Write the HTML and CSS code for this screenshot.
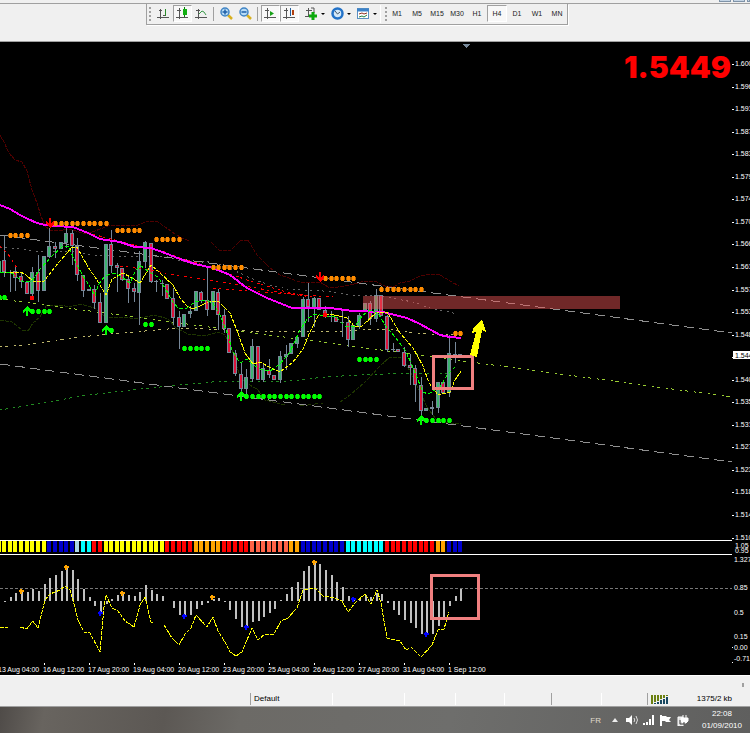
FILE: index.html
```html
<!DOCTYPE html>
<html lang="en">
<head>
    <meta charset="UTF-8">
    <meta name="viewport" content="width=device-width, initial-scale=1.0">
    <title>Chart terminal</title>
    <link rel="stylesheet" href="styles.css">
</head>
<body>
    <header class="top">
        <div class="window-btns"><i></i><i></i><i></i></div>
        <div class="toolbar">
            <span class="grip"></span>
            <button class="tool" aria-label="Bar chart">
                <svg width="13" height="13"><path class="axes" d="M3.500 2v10M0 10.500h12M2 3.500h3M6 8.500h3"/><path d="M8.500 2v7" stroke="#2a8a2a"/></svg>
            </button>
            <button class="tool pressed" aria-label="Candlesticks">
                <svg width="13" height="13"><path class="axes" d="M3.500 1v11M0 10.500h12M1 3.500h4"/><path d="M8.500 0v10" stroke="#0a7a0a"/><rect x="7" y="2" width="4" height="6" fill="#12b012"/></svg>
            </button>
            <button class="tool" aria-label="Line chart">
                <svg width="13" height="13"><path class="axes" d="M3.500 2v10M0 10.500h12M1 3.500h4"/><path d="M4 7l3-3 2 1 2 3" stroke="#3a9a4a"/></svg>
            </button>
            <span class="sep"></span>
            <button class="tool" aria-label="Zoom in">
                <svg width="13" height="13"><path d="M8 8l4 4" stroke="#d8b020" stroke-width="2.500"/><circle cx="5" cy="5" r="4" fill="#b8dcf6" stroke="#3f84c4" stroke-width="1.500"/><path d="M5 2.500v5M2.500 5h5" stroke="#1d5fa8" stroke-width="1.500"/></svg>
            </button>
            <button class="tool" aria-label="Zoom out">
                <svg width="13" height="13"><path d="M8 8l4 4" stroke="#d8b020" stroke-width="2.500"/><circle cx="5" cy="5" r="4" fill="#b8dcf6" stroke="#3f84c4" stroke-width="1.500"/><path d="M2.500 5h5" stroke="#1d5fa8" stroke-width="1.500"/></svg>
            </button>
            <span class="sep"></span>
            <button class="tool pressed" aria-label="Auto scroll">
                <svg width="13" height="13"><path class="axes" d="M3.500 1v11M0 10.500h12M1 3.500h4"/><path d="M6 4l4 2.500-4 2.500z" fill="#18a018"/></svg>
            </button>
            <button class="tool pressed" aria-label="Chart shift">
                <svg width="13" height="13"><path class="axes" d="M3.500 1v11M0 10.500h12M1 3.500h4"/><path d="M7.500 1v8" stroke="#2060a0"/><path d="M10 3v5" stroke="#b04010" stroke-width="2"/></svg>
            </button>
            <button class="tool menu" aria-label="Indicators">
                <svg width="13" height="13"><path class="axes" d="M1 3.500h6M3.500 1v9M0 9.500h6M6 1h3v5"/><path d="M8 5v8M4 9h8" stroke="#0aa80a" stroke-width="3"/></svg>
            </button>
            <button class="tool menu" aria-label="Periods">
                <svg width="13" height="13"><circle cx="6.500" cy="6.500" r="5" fill="#d4e9fa" stroke="#2272c8" stroke-width="2.500"/><path d="M4 4l2.500 3L9 5" stroke="#456"/></svg>
            </button>
            <button class="tool menu" aria-label="Templates">
                <svg width="13" height="13"><rect x=".5" y="1.500" width="11" height="10" fill="#fff" stroke="#5c8fc0"/><path d="M0 3h12" stroke="#3c82c8" stroke-width="3"/><path d="M2 7l3-1 2 1 3-1" stroke="#903020"/><path d="M2 10l3-1 2 1 3-2" stroke="#208040"/></svg>
            </button>
            <span class="divider"></span>
            <span class="grip narrow"></span>
            <button class="period">M1</button>
            <button class="period">M5</button>
            <button class="period">M15</button>
            <button class="period">M30</button>
            <button class="period">H1</button>
            <button class="period pressed">H4</button>
            <button class="period">D1</button>
            <button class="period">W1</button>
            <button class="period">MN</button>
        </div>
    </header>

    <main class="charts">
        <svg id="price" viewBox="0 42 750 498"></svg>
        <svg id="signal" viewBox="0 540 750 14"></svg>
        <svg id="osc" viewBox="0 554 750 121"></svg>
    </main>

    <footer class="status">
        <div class="scroll-row"><i></i></div>
        <div class="cells">
            <span></span>
            <span class="dark">Default</span>
            <span></span>
            <span></span>
            <span></span>
            <span></span>
            <span class="dark"></span>
            <span></span>
            <span class="dark connection">
                <svg width="18" height="9"><path d="M1 0v9M4 0v7M7 0v6M10 0v4M13 0v3M16 0v1" stroke="#6b8010" stroke-width="2"/><path d="M4 8v1M7 7v2M10 5v4M13 4v5M16 2v7" stroke="#184860" stroke-width="2"/></svg>
                1375/2 kb
            </span>
        </div>
    </footer>

    <div class="taskbar">
        <span class="lang">FR</span>
        <svg class="up" width="6" height="4"><path d="M0 4l3-4 3 4z" fill="#eee"/></svg>
        <svg width="12" height="10"><path d="M0 3h3l3-3v10l-3-3H0z" fill="#fff"/><path d="M8 3q1.500 2 0 4M10 1q3 4 0 8" fill="none" stroke="#ddd"/></svg>
        <svg width="12" height="10"><path d="M0 8h2v2H0zM3 7h2v3H3zM6 4h2v6H6zM9 0h2v10H9z" fill="#fff"/></svg>
        <svg width="12" height="11"><path d="M1 0v11" stroke="#fff" stroke-width="2"/><path d="M2 1h4l1 1h4L9 5l2 2H6L5 6H2z" fill="#fff"/></svg>
        <svg width="12" height="11"><path d="M1 2h5v9H1z" fill="#ddd" stroke="#fff"/><path d="M6 0v3M9 0v3M4 3h7v3L9 8H6L4 6z" fill="#fff" stroke="#fff"/><path d="M3 5v4h4v-2" fill="none" stroke="#444"/></svg>
        <div class="clock">22:08<br>01/09/2010</div>
    </div>

    <script src="chart.js"></script>
</body>
</html>
```

FILE: styles.css
```css
* {
    margin: 0;
    padding: 0;
    box-sizing: border-box;
}

body {
    font-family: "Liberation Sans", Arial, sans-serif;
    background: #f0f0f0;
    color: #000;
    min-height: 100vh;
    display: flex;
    flex-direction: column;
    overflow-x: hidden;
}

/* toolbar */
.top {
    height: 42px;
    border-bottom: 1px solid #a0a0a0;
}

.window-btns {
    height: 3px;
    display: flex;
    justify-content: flex-end;
    gap: 2px;
    overflow: hidden;
}

.window-btns i {
    width: 12px;
    height: 2px;
    background: #c4d4e4;
    border: 1px solid #7f93a8;
    border-top: none;
}

.window-btns i:last-child {
    width: 3px;
}

.toolbar {
    display: flex;
    align-items: center;
    height: 20px;
    border-top: 1px solid #a0a0a0;
    position: relative;
}

.toolbar::before {
    content: '';
    width: 148px;
    flex: none;
}

.toolbar::after {
    content: '';
    position: absolute;
    left: 146px;
    top: 0;
    width: 420px;
    height: 20px;
    border: 1px solid #a0a0a0;
    border-top: none;
    box-shadow: 1px 1px 0 #fff;
    pointer-events: none;
}

.grip {
    width: 6px;
    height: 14px;
    flex: none;
    background: repeating-linear-gradient(#a0a0a0 0 2px, transparent 2px 4px) 1px 0 / 2px 14px no-repeat;
}

.narrow {
    width: 3px;
}

.tool,
.period {
    flex: none;
    width: 19px;
    height: 17px;
    display: flex;
    align-items: center;
    justify-content: center;
    background: none;
    border: 1px solid transparent;
    font: 7px "Liberation Sans", Arial, sans-serif;
    color: #222;
}

.period {
    width: 20px;
}

.tool svg {
    flex: none;
    fill: none;
}

.axes {
    stroke: #555;
}

.tool.pressed,
.period.pressed {
    background: #f8f8f8;
    border-color: #a0a0a0 #fff #fff #a0a0a0;
}

.menu {
    width: 26px;
    gap: 3px;
    padding-left: 5px;
}

.menu::after {
    content: '';
    border: 2px solid transparent;
    border-top-color: #000;
    border-bottom: none;
}

.sep {
    width: 1px;
    height: 14px;
    margin: 0 3px 0 2px;
    background: #a0a0a0;
    flex: none;
}

.divider {
    width: 1px;
    height: 18px;
    margin: 0 3px;
    background: #fff;
    flex: none;
}

/* charts */
.charts {
    background: #000;
    display: flex;
    flex-direction: column;
}

.charts svg {
    display: block;
    width: 100%;
    height: auto;
    fill: none;
    shape-rendering: crispEdges;
}

.charts text {
    font: 7px "Liberation Sans", Arial, sans-serif;
    fill: #fff;
}

.charts .quote {
    font: 900 30px Inter, "Liberation Sans", sans-serif;
    fill: #f00;
}

.charts .now {
    fill: #000;
}

/* status bar */
.status {
    height: 32px;
    border-top: 1px solid #fff;
    border-bottom: 1px solid #a0a0a0;
    background: #f0f0f0;
}

.scroll-row {
    height: 17px;
    display: flex;
    justify-content: flex-end;
    align-items: center;
    padding-right: 6px;
}

.scroll-row i {
    width: 2px;
    height: 4px;
    background: #a0a0a0;
}

.cells {
    display: grid;
    grid-template-columns: 250fr 82fr 72fr 51fr 49fr 47fr 50fr 46fr 103fr;
    height: 12px;
    font-size: 8px;
    line-height: 12px;
}

.cells span {
    border-left: 1px solid #fff;
    padding-left: 3px;
    white-space: nowrap;
}

.cells span:first-child {
    border-left: none;
}

.cells .dark {
    border-color: #a0a0a0;
}

.cells .connection {
    display: flex;
    align-items: center;
    justify-content: space-between;
    padding-right: 18px;
}

/* taskbar */
.taskbar {
    flex: 1;
    min-height: 26px;
    display: flex;
    align-items: center;
    justify-content: flex-end;
    gap: 5px;
    padding-right: 8px;
    background: linear-gradient(100deg, #4f4b48 0, #68645f 6%, #5c5854 22%, #6c6a66 32%, #6e6e6c 60%, #5f5f5e);
    color: #fff;
    font-size: 8px;
}

.taskbar .lang {
    margin-right: 6px;
    color: #e0dccc;
}

.taskbar .up {
    margin-right: 3px;
}

.clock {
    margin-left: 8px;
    line-height: 12px;
    text-align: center;
}
```

FILE: chart.js
```javascript
const NS = 'http://www.w3.org/2000/svg';
const price = document.getElementById('price');
const signal = document.getElementById('signal');
const osc = document.getElementById('osc');

// x position of the bar with index i
const barX = i => Math.round(4.2 + i * 5.63);

function add(parent, tag, attrs, text) {
    const el = document.createElementNS(NS, tag);
    for (const key in attrs) el.setAttribute(key, attrs[key]);
    if (text) el.textContent = text;
    parent.appendChild(el);
    return el;
}

function rect(parent, x, y, width, height, fill) {
    return add(parent, 'rect', { x, y, width, height, fill });
}

function line(parent, points, stroke, dash, width) {
    add(parent, 'polyline', {
        points, stroke,
        'stroke-width': width || 1,
        'stroke-dasharray': dash || 'none'
    });
}

// bands, channel and averages
line(price, '0,135 4,142 9,153 15,160 22,162 27,171 32,190 37,203 41,216 45,226 50,230 56,231 70,229 85,234 95,231 108,226 138,225 148,221 158,222 168,229 175,234 182,238 189,241', '#500000', '4 1');
line(price, '211,242 219,250 231,250 241,240 248,240 257,255 270,268 280,275 300,282 320,282 328,287 338,287 350,285 365,281 375,281 385,286 395,286 400,283 410,281 420,276 430,274 440,275 450,281 459,286', '#500000', '4 1');
line(price, '0,320 12,322 22,330 28,331 33,323 40,317 46,306 60,305 70,307 80,304 95,308 105,317 125,317 135,319 155,315 168,319 176,328 188,334 205,336 218,332 225,335 232,350 238,370 242,380 258,390 265,400 285,405', '#1e3600', '4 1');
line(price, '300,406 323,403', '#1e3600', '4 3');
line(price, '340,402 350,395 365,382 380,366 390,357 400,357 405,362 412,375 420,392 427,407 435,418 440,422 461,424', '#1e3600', '4 1');
line(price, '0,247 20,249 35,251 75,251 90,255 130,257 165,256 180,261 210,262 225,266 250,278 270,285 287,289 323,291 353,295 380,296 413,302 430,308 458,314', '#666', '2 3 2 5');
line(price, '0,347 25,345 50,341 80,337 110,334 145,331 180,328 250,331 350,331 370,329 390,329 413,333 440,335 458,334', '#bdb76b', '2 3 3 6');
line(price, '0,410 50,402 80,396 140,389 180,385 212,382 290,381 325,377 360,375 410,373 450,374', '#228b22', '2 3 3 5');

line(price, '0,235 732,333', '#909090', '10 5');
line(price, '0,364 732,462', '#909090', '10 5');
line(price, '0,299 732,397', '#9acd32', '2 3 3 6');

// candles: high, body top, body bottom, low, direction
const candles = [
    [235, 260, 272, 277, 'r'], [270, 272, 273, 292, 'd'], [265, 271, 278, 291, 'r'], [273, 276, 282, 288, 'r'],
    [282, 282, 294, 294, 'r'], [267, 272, 294, 296, 'g'], [255, 272, 291, 302, 'r'], [256, 256, 291, 291, 'g'],
    [228, 246, 257, 258, 'g'], [242, 246, 249, 258, 'r'], [242, 242, 249, 249, 'g'], [227, 233, 243, 248, 'g'],
    [230, 233, 246, 265, 'r'], [238, 246, 275, 281, 'r'], [275, 275, 291, 297, 'r'], [289, 289, 291, 291, 'd'],
    [285, 289, 303, 309, 'r'], [293, 302, 323, 323, 'r'], [244, 244, 323, 323, 'g'], [230, 244, 266, 273, 'r'],
    [263, 265, 268, 292, 'r'], [268, 268, 280, 281, 'r'], [275, 279, 289, 303, 'r'], [283, 288, 292, 302, 'r'],
    [251, 261, 293, 325, 'g'], [241, 242, 262, 268, 'g'], [243, 243, 282, 283, 'r'], [280, 281, 282, 292, 'd'],
    [280, 283, 284, 296, 'd'], [284, 284, 299, 299, 'r'], [288, 298, 318, 325, 'r'], [311, 317, 327, 349, 'r'],
    [314, 314, 327, 327, 'g'], [306, 311, 314, 318, 'g'], [291, 291, 311, 311, 'g'], [291, 292, 301, 303, 'r'],
    [267, 300, 310, 316, 'r'], [291, 291, 310, 310, 'g'], [289, 292, 315, 330, 'r'], [309, 315, 329, 333, 'r'],
    [328, 328, 353, 353, 'r'], [350, 353, 374, 376, 'r'], [363, 374, 389, 398, 'r'], [369, 377, 389, 397, 'g'],
    [339, 346, 379, 382, 'g'], [346, 346, 380, 380, 'r'], [364, 368, 380, 382, 'g'], [359, 370, 375, 378, 'r'],
    [375, 375, 380, 380, 'r'], [351, 356, 380, 383, 'g'], [345, 354, 357, 370, 'g'], [343, 343, 354, 354, 'g'],
    [335, 337, 344, 348, 'g'], [297, 299, 337, 337, 'g'], [283, 299, 307, 322, 'r'], [297, 298, 308, 327, 'g'],
    [298, 298, 310, 310, 'r'], [306, 310, 317, 318, 'r'], [311, 316, 317, 322, 'd'], [317, 317, 322, 322, 'r'],
    [309, 322, 323, 337, 'd'], [316, 322, 340, 347, 'r'], [325, 325, 340, 340, 'g'], [313, 315, 327, 329, 'g'],
    [303, 303, 312, 312, 'g'], [301, 303, 319, 325, 'r'], [289, 295, 319, 322, 'g'], [295, 295, 316, 316, 'r'],
    [315, 316, 350, 352, 'r'], [343, 349, 350, 352, 'd'], [349, 349, 352, 352, 'r'], [347, 352, 366, 367, 'r'],
    [354, 365, 368, 385, 'r'], [365, 368, 385, 402, 'r'], [377, 385, 411, 420, 'r'], [408, 408, 411, 411, 'g'],
    [401, 407, 409, 415, 'd'], [382, 382, 408, 413, 'g'], [382, 382, 393, 394, 'r'], [335, 353, 393, 397, 'g'],
    [342, 354, 355, 363, 'd'], [354, 354, 355, 355, 'd']
];
const bodyColors = { r: '#dc143c', g: '#3cb371' };

rect(price, 0, 261, 1, 12, '#3cb371');
candles.forEach(([high, top, bottom, low, dir], i) => {
    const x = barX(i);
    rect(price, x, high, 1, low - high, '#778899');
    rect(price, x - 2, top, 4, bottom - top, '#778899');
    if (dir !== 'd') rect(price, x - 1, top + 1, 2, Math.max(bottom - top - 2, 1), bodyColors[dir]);
});

line(price, '0,246 8,254 17,268', '#f00', '3 3');
line(price, '88,233 130,244 165,252 180,258 213,268 250,281 290,293 310,297', '#f00', '3 2 2 4');
line(price, '120,266 150,270 180,276 215,281 250,287 290,294 333,297', '#f00', '3 3 2 5');
line(price, '213,288 250,291 290,294 315,297', '#f00', '3 3 2 5');
line(price, '0,205 10,209 20,215 28,219 37,223 45,225 55,226 73,227 88,233 100,239 120,242 135,247 151,248 165,253 180,259 195,264 213,268 230,275 247,288 267,298 292,308 330,308 353,311 383,312 407,318 420,324 440,335 450,337 461,338', '#f0f', '', 2);
line(price, '0,273 20,272 25,274 33,281 44,281 55,267 72,247 77,247 88,267 97,280 106,295 112,279 123,273 132,278 140,283 145,275 151,265 160,273 173,285 180,298 187,306 193,309 200,306 208,302 218,301 230,313 238,333 245,353 253,364 260,362 273,369 280,372 293,362 303,349 310,332 318,316 330,314 347,318 355,327 362,326 377,312 387,312 400,333 413,348 423,366 429,383 433,388 438,395 450,392 455,380 461,371', '#ff0', '4 1');
line(price, '0,273 10,272 17,277 23,282 32,281 40,269 52,256 62,247 68,246 75,261 83,276 90,287 95,296 98,285 105,276 115,273 123,278 130,283 135,272 140,265 148,271 158,277 165,288 173,302 178,308 187,308 195,302 205,300 213,303 220,315 228,335 232,350 240,363 247,359 252,364 260,369 270,371 280,364 290,352 300,330 308,318 315,314 325,316 335,316 345,326 355,326 362,316 370,310 378,313 385,325 395,337 405,350 412,365 418,380 423,392 428,394 440,387 447,375 455,367', '#0f0', '4 2');

// dots: y, first bar, last bar
function dots(rows, color, edge) {
    rows.forEach(([y, from, to]) => {
        for (let i = from; i <= to; i++) {
            rect(price, barX(i) - 2, y - 1, 5, 3, edge);
            rect(price, barX(i) - 1, y - 2, 3, 5, color);
            rect(price, barX(i) - 1, y - 1, 3, 3, color);
        }
    });
}
dots([[235, 1, 4], [223, 9, 18], [230, 20, 24], [239, 27, 31], [267, 37, 42], [278, 57, 62], [289, 67, 74], [333, 80, 81]], '#ff8c00', '#b06000');
dots([[297, -1, 0], [311, 5, 8], [330, 19, 19], [324, 25, 26], [348, 32, 36], [396, 43, 56], [359, 63, 66], [420, 75, 79]], '#0f0', '#0c0');

function arrow(x, y, dir, color) {
    add(price, 'path', { d: `M${x} ${y - 5 * dir}l-4 ${4 * dir}v${3 * dir}l3 ${-2 * dir}v${5 * dir}h2v${-5 * dir}l3 ${2 * dir}v${-3 * dir}z`, fill: color });
}
arrow(27, 311, 1, '#0f0');
arrow(106, 330, 1, '#0f0');
arrow(241, 396, 1, '#0f0');
arrow(421, 420, 1, '#0f0');
arrow(50, 223, -1, '#f00');
arrow(320, 277, -1, '#f00');
rect(price, 30, 296, 4, 4, '#f00');
rect(price, 323, 313, 4, 4, '#f00');

// drawn objects
rect(price, 363, 296, 257, 13, '#ee5555').setAttribute('opacity', '.47');
add(price, 'rect', { x: 433.5, y: 356.5, width: 39, height: 32, stroke: '#f08080', 'stroke-width': 3 });
add(price, 'path', { d: 'M470 355l6-23-4 1 1-4 9-10 4 13-4-2-5 27z', fill: '#ff0' });
add(price, 'path', { d: 'M463 44h7l-3.5 4z', fill: '#778899' });
add(price, 'text', { x: 731, y: 78, 'text-anchor': 'end', class: 'quote' }, '1.5449');

// price scale
const labels = ['1.600', '1.596', '1.591', '1.587', '1.583', '1.579', '1.574', '1.570', '1.566', '1.561', '1.557',
    '1.553', '1.548', '1.544', '1.540', '1.535', '1.531', '1.527', '1.523', '1.518', '1.514', '1.510'];
labels.forEach((label, i) => {
    const y = Math.round(64 + i * 22.55);
    rect(price, 732, y, 2, 1, '#fff');
    if (i === 13) {
        rect(price, 733, 351, 17, 8, '#fff');
        add(price, 'text', { x: 735, y: 358, class: 'now' }, label);
    } else {
        add(price, 'text', { x: 735, y: y + 2 }, label);
    }
});

// trend strip: color, number of bars
rect(signal, 0, 540, 732, 1, '#fff');
let bar = -1;
[['#ff0', 9], ['#00c', 5], ['#add8e6', 1], ['#0ff', 2], ['#f00', 2], ['#ff0', 11], ['#f00', 5], ['#ffa500', 5],
    ['#f00', 5], ['#ff6347', 7], ['#ffa500', 2], ['#00c', 8], ['#0ff', 7], ['#f00', 9], ['#ffa500', 2], ['#00c', 3]
].forEach(([color, count]) => {
    for (let n = 0; n < count; n++, bar++) rect(signal, barX(bar) - 2, 541, 4, 11, color);
});
add(signal, 'text', { x: 735, y: 548 }, '1.05');
add(signal, 'text', { x: 735, y: 553 }, '0.95');

// oscillator
const values = [-1, 4, 8, 9, 9, 12, 10, 17, 23, 26, 30, 33, 31, 22, 12, 4, -5, -12, -3, 2, 6, 7, 6, 5, 9, 16, 11, 7, 5, 0,
    -7, -14, -15, -14, -8, -4, -2, 2, 3, -1, -9, -18, -26, -27, -21, -20, -16, -12, -8, 1, 7, 14, 19, 30, 35, 38, 37,
    31, 26, 19, 14, 5, 3, 2, 6, 4, 8, 7, -2, -9, -14, -19, -22, -27, -33, -33, -33, -25, -18, -5, 5, 12];
rect(osc, 0, 554, 732, 1, '#fff');
line(osc, '0,588.500 732,588.500', '#777', '3 2');
values.forEach((v, i) => rect(osc, barX(i), v > 0 ? 601 - v : 601, 2, Math.abs(v), '#c0c0c0'));

line(osc, '0,627 5,628 8,627', '#ff0', '4 1');
line(osc, '20,627 27,629 33,621 38,628 45,600 50,594 60,590 65,586 70,590 73,600 78,620 84,632 90,633 100,652 104,607 106,595 112,608 118,611 125,621 134,627 140,605 145,597 151,622 154,622', '#ff0', '4 1');
line(osc, '164,625 172,638 179,645 185,634 191,628 196,615 207,627 213,617 218,631 225,642 230,652 236,656 242,652 252,628 258,640 265,634 274,634 281,621 288,618 297,608 303,590 315,588 323,596 335,598 342,601 348,612 355,603 365,594 371,604 377,590 381,603 387,638 400,641 406,650 411,647 421,657 432,645 438,630 444,629 449,612', '#ff0', '4 1');

function star(x, y, color) {
    rect(osc, x - 2, y - 1, 5, 2, color);
    rect(osc, x - 1, y - 2, 2, 5, color);
}
[[21, 591], [66, 567], [122, 593], [212, 597], [314, 562]].forEach(([x, y]) => star(x, y, '#ffa500'));
[[100, 613], [184, 616], [246, 627], [353, 599], [426, 634]].forEach(([x, y]) => star(x, y, '#00f'));
add(osc, 'rect', { x: 431.5, y: 575.5, width: 47, height: 43, stroke: '#f08080', 'stroke-width': 3 });

[['1.327', 562], ['0.85', 590], ['0.5', 615], ['0.15', 639], ['0.00', 650], ['-0.71', 661]].forEach(([label, y]) => {
    add(osc, 'text', { x: 734, y }, label);
});
rect(osc, 732, 647, 1, 1, '#fff');
rect(osc, 732, 662, 1, 1, '#fff');

// time scale
['13 Aug 04:00', '16 Aug 12:00', '17 Aug 20:00', '19 Aug 04:00', '20 Aug 12:00', '23 Aug 20:00', '25 Aug 04:00',
    '26 Aug 12:00', '27 Aug 20:00', '31 Aug 04:00', '1 Sep 12:00'].forEach((label, i) => {
    const x = i * 45 - 1;
    rect(osc, x, 663, 1, 2, '#fff');
    add(osc, 'text', { x: x - 1, y: 672 }, label);
});
```
